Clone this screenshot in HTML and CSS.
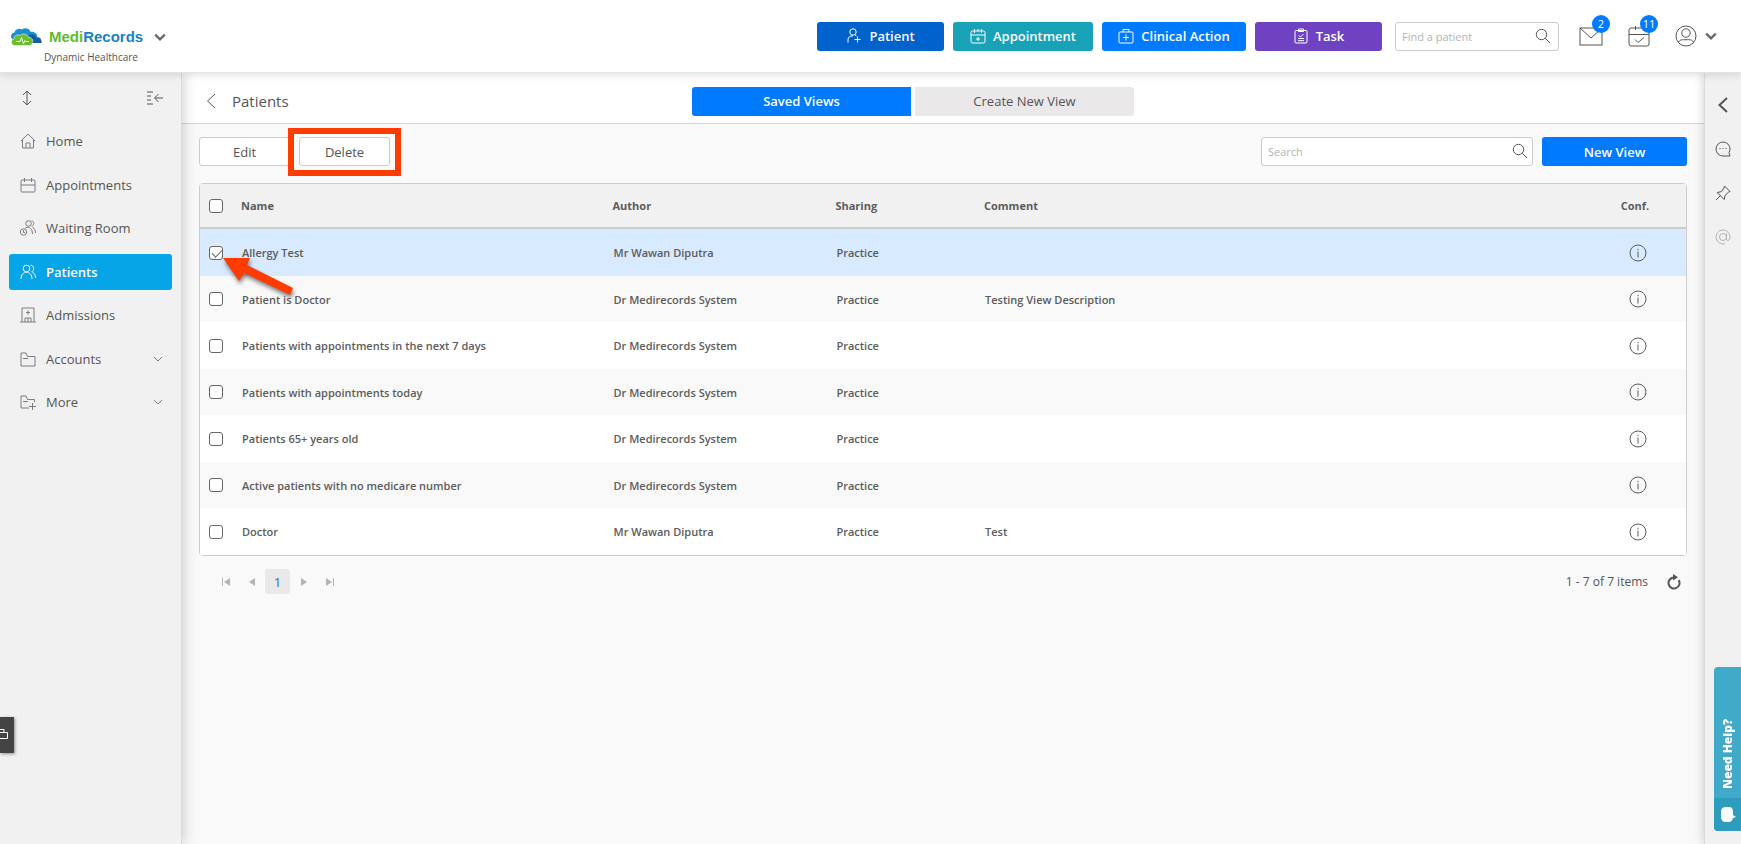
FILE: index.html
```html
<!DOCTYPE html>
<html lang="en">

<head>
    <meta charset="UTF-8">
    <meta name="viewport" content="width=device-width, initial-scale=1.0" />
    <title>Patients - MediRecords</title>
    <link rel="stylesheet" href="styles.css">
</head>

<body>
    <!-- Shared icons -->
    <svg class="sprite" aria-hidden="true">
        <symbol id="i-search" viewBox="0 0 16 16">
            <circle cx="6.5" cy="6.5" r="5.2" />
            <path d="M10.3 10.3L15 15" />
        </symbol>
        <symbol id="i-down" viewBox="0 0 10 10">
            <path d="M1 3l4 4 4-4" />
        </symbol>
        <symbol id="i-back" viewBox="0 0 10 16">
            <path d="M9 1L1.5 8 9 15" />
        </symbol>
        <symbol id="i-info" viewBox="0 0 18 18">
            <circle cx="9" cy="9" r="8" />
            <path d="M9 7.5v6M9 4.8v1.4" />
        </symbol>
    </svg>

    <!-- Top Bar -->
    <header class="topbar">
        <div class="brand">
            <a href="#" class="logo">
                <svg class="cloud" viewBox="0 0 32 18" aria-hidden="true">
                    <path fill="#1b8fd0" d="M4 12C0 11 0 5 4.500 4.500 5 1 10 0 12 1.500 15-1 20 1 20.500 4 25 3 28 7 27 9 31 9 32 12 31 15H10z" />
                    <path fill="#14609f" d="M19 7c3-2 7 0 7.500 3 3-1 5.500 2 5 5H21z" />
                    <path fill="#6abf2b" stroke="#fff" stroke-width=".5" d="M5 17.500C1 17.500 0 12 4 11c0-4 4-5 6-3.500 3-3 8-1 8.500 2 3-.5 5 2 4 4.500 0 2-1 3.500-3 3.500z" />
                    <path fill="none" stroke="#fff" d="M6 13.500h4l1.500-4 2 6 1.500-3 1 1h3" />
                </svg>
                <span class="medi">Medi</span><span class="records">Records</span>
            </a>
            <button class="plain" aria-label="Switch practice"><svg class="icon chevron"><use href="#i-down" /></svg></button>
            <p>Dynamic Healthcare</p>
        </div>

        <div class="actions">
            <button class="btn patient">
                <svg class="icon" viewBox="0 0 14 16"><circle cx="6" cy="4" r="3.200" /><path d="M1 14.500v-2.500q0-4 5-4.200M8 7.200l1.500.8M10.500 8.500v6M7.500 11.500h6" /></svg>
                Patient
            </button>
            <button class="btn appointment">
                <svg class="icon" viewBox="0 0 16 16"><rect x="1" y="3" width="14" height="12" rx="1.500" /><path d="M1 7h14M4.500 1v4M8 1v2M11.500 1v4M8 9v4M6 11h4" /></svg>
                Appointment
            </button>
            <button class="btn clinical">
                <svg class="icon" viewBox="0 0 16 16"><rect x="1" y="4" width="14" height="11" rx="1" /><path d="M5 4V1.500h6V4M8 6.500v6M5 9.500h6" /></svg>
                Clinical Action
            </button>
            <button class="btn task">
                <svg class="icon" viewBox="0 0 14 16"><rect x="1" y="2.500" width="12" height="12.500" rx="1" /><path d="M4.500 1h5v2.500h-5zM4.500 7.500l2 1.500 3-3M4 10.500h6M4 12.700h6" /></svg>
                Task
            </button>
        </div>

        <div class="search find">
            <input type="text" placeholder="Find a patient" aria-label="Find a patient">
            <svg class="icon"><use href="#i-search" /></svg>
        </div>

        <div class="alerts">
            <a href="#" class="alert" aria-label="Messages">
                <svg class="icon" viewBox="0 0 24 22"><rect x="1" y="3" width="22" height="17" /><path d="M1 3l11 10L23 3" /></svg>
                <span class="badge">2</span>
            </a>
            <a href="#" class="alert" aria-label="Tasks due">
                <svg class="icon" viewBox="0 0 24 22"><rect x="2" y="3" width="20" height="18" rx="2" /><path d="M2 9.500h20M8.500 1v4M8 14.500l3 3 6-5" /></svg>
                <span class="badge">11</span>
            </a>
            <button class="plain account" aria-label="Account">
                <svg class="icon" viewBox="0 0 22 22"><circle cx="11" cy="11" r="10" /><circle cx="11" cy="8" r="4.200" /><path d="M3.500 17.500c1-3 3.500-2.800 7.500-2.800s6.500-.2 7.500 2.800" /></svg>
                <svg class="icon chevron"><use href="#i-down" /></svg>
            </button>
        </div>
    </header>

    <div class="layout">
        <!-- Side Menu -->
        <nav class="sidebar">
            <div class="side-tools">
                <button class="plain" aria-label="Resize menu"><svg class="icon" viewBox="0 0 16 16"><path d="M8 2v12M4 5l4-4 4 4M4 11l4 4 4-4" /></svg></button>
                <button class="plain" aria-label="Collapse menu"><svg class="icon" viewBox="0 0 16 16"><path d="M0 2h6M0 6h4M0 10h4M0 14h6M16 8H8M11.500 4L7.500 8l4 4" /></svg></button>
            </div>
            <ul>
                <li><a href="#">
                    <svg class="icon" viewBox="0 0 16 16"><path d="M1 8l7-7 7 7M2.500 7v8h11V7M6 15v-5h4v5" /></svg>
                    Home</a></li>
                <li><a href="#">
                    <svg class="icon" viewBox="0 0 16 16"><rect x="1" y="3" width="14" height="12" rx="1" /><path d="M1 8h14M4.500 1v4M11.500 1v4" /></svg>
                    Appointments</a></li>
                <li><a href="#">
                    <svg class="icon" viewBox="0 0 16 16"><circle cx="8.500" cy="3.500" r="2.800" /><path d="M11.500 1c3 0 3 4.500 0 5M5 8.500c2-2.500 7.500-1.500 7.500 5.500M12.500 7.500c2 .5 3 3 3 5.500" /><circle cx="3.500" cy="12" r="3.200" /><path d="M3.500 10v2.500h1.500" /></svg>
                    Waiting Room</a></li>
                <li><a href="#" class="active">
                    <svg class="icon" viewBox="0 0 16 16"><circle cx="6.500" cy="4.500" r="3.300" /><path d="M1 15c0-9 11-9 11 0M10.500 1.300c4 0 4 6 1 6.500M12.500 8.500c2.500 1 3 3 3 5.500" /></svg>
                    Patients</a></li>
                <li><a href="#">
                    <svg class="icon" viewBox="0 0 16 16"><path d="M0 15h16M2 15V1h12v14M8 3.500v4M6 5.500h4M5 15v-4h6v4M8 11v4" /></svg>
                    Admissions</a></li>
                <li><a href="#">
                    <svg class="icon" viewBox="0 0 16 16"><path d="M1 15V2h5l1.500 3.500H15V15zM3 7.500h5" /></svg>
                    Accounts<svg class="icon caret"><use href="#i-down" /></svg></a></li>
                <li><a href="#">
                    <svg class="icon" viewBox="0 0 16 16"><path d="M9 14H1V2h5l1.500 3.500h7V8M3 7.500h5M12.500 9v7M9 12.500h7" /></svg>
                    More<svg class="icon caret"><use href="#i-down" /></svg></a></li>
            </ul>
        </nav>

        <main>
            <!-- Page Heading -->
            <div class="page-head">
                <div class="title">
                    <a href="#" aria-label="Back"><svg class="icon"><use href="#i-back" /></svg></a>
                    <h1>Patients</h1>
                </div>
                <div class="tabs">
                    <button class="active">Saved Views</button>
                    <button>Create New View</button>
                </div>
            </div>

            <div class="content">
                <div class="toolbar">
                    <button class="btn outline">Edit</button>
                    <div class="marked"><button class="btn outline">Delete</button></div>
                    <div class="search views">
                        <input type="text" placeholder="Search" aria-label="Search views">
                        <svg class="icon"><use href="#i-search" /></svg>
                    </div>
                    <button class="btn new-view">New View</button>
                </div>

                <!-- Saved Views -->
                <div class="grid">
                    <table>
                        <colgroup>
                            <col class="c-check">
                            <col class="c-name">
                            <col class="c-author">
                            <col class="c-sharing">
                            <col>
                            <col class="c-conf">
                        </colgroup>
                        <thead>
                            <tr>
                                <th><input type="checkbox" aria-label="Select all"></th>
                                <th>Name</th>
                                <th>Author</th>
                                <th>Sharing</th>
                                <th>Comment</th>
                                <th>Conf.</th>
                            </tr>
                        </thead>
                        <tbody>
                            <tr class="selected">
                                <td>
                                    <input type="checkbox" aria-label="Allergy Test" checked>
                                    <svg class="pointer" viewBox="0 0 72 40" aria-hidden="true"><path d="M0 0h27l-3 7 46 23-3 7-46-22-5 8z" /></svg>
                                </td>
                                <td>Allergy Test</td>
                                <td>Mr Wawan Diputra</td>
                                <td>Practice</td>
                                <td></td>
                                <td><svg class="icon info"><use href="#i-info" /></svg></td>
                            </tr>
                            <tr>
                                <td><input type="checkbox" aria-label="Patient is Doctor"></td>
                                <td>Patient is Doctor</td>
                                <td>Dr Medirecords System</td>
                                <td>Practice</td>
                                <td>Testing View Description</td>
                                <td><svg class="icon info"><use href="#i-info" /></svg></td>
                            </tr>
                            <tr>
                                <td><input type="checkbox" aria-label="Patients with appointments in the next 7 days"></td>
                                <td>Patients with appointments in the next 7 days</td>
                                <td>Dr Medirecords System</td>
                                <td>Practice</td>
                                <td></td>
                                <td><svg class="icon info"><use href="#i-info" /></svg></td>
                            </tr>
                            <tr>
                                <td><input type="checkbox" aria-label="Patients with appointments today"></td>
                                <td>Patients with appointments today</td>
                                <td>Dr Medirecords System</td>
                                <td>Practice</td>
                                <td></td>
                                <td><svg class="icon info"><use href="#i-info" /></svg></td>
                            </tr>
                            <tr>
                                <td><input type="checkbox" aria-label="Patients 65+ years old"></td>
                                <td>Patients 65+ years old</td>
                                <td>Dr Medirecords System</td>
                                <td>Practice</td>
                                <td></td>
                                <td><svg class="icon info"><use href="#i-info" /></svg></td>
                            </tr>
                            <tr>
                                <td><input type="checkbox" aria-label="Active patients with no medicare number"></td>
                                <td>Active patients with no medicare number</td>
                                <td>Dr Medirecords System</td>
                                <td>Practice</td>
                                <td></td>
                                <td><svg class="icon info"><use href="#i-info" /></svg></td>
                            </tr>
                            <tr>
                                <td><input type="checkbox" aria-label="Doctor"></td>
                                <td>Doctor</td>
                                <td>Mr Wawan Diputra</td>
                                <td>Practice</td>
                                <td>Test</td>
                                <td><svg class="icon info"><use href="#i-info" /></svg></td>
                            </tr>
                        </tbody>
                    </table>
                </div>

                <!-- Pager -->
                <div class="pager">
                    <button aria-label="First page"><svg viewBox="0 0 8 8"><path d="M0 0h1v8H0zM8 0v8L2 4z" /></svg></button>
                    <button aria-label="Previous page"><svg viewBox="0 0 8 8"><path d="M7 0v8L1 4z" /></svg></button>
                    <button class="current">1</button>
                    <button aria-label="Next page"><svg viewBox="0 0 8 8"><path d="M1 0v8l6-4z" /></svg></button>
                    <button aria-label="Last page"><svg viewBox="0 0 8 8"><path d="M7 0h1v8H7zM0 0v8l6-4z" /></svg></button>
                    <span class="count">1 - 7 of 7 items</span>
                    <button class="refresh" aria-label="Refresh"><svg class="icon" viewBox="0 0 14 16"><path d="M7 3.500a5.500 5.500 0 1 0 4.700 2.600" /><path class="head" d="M6 0l5 3.200L6 6.500z" /></svg></button>
                </div>
            </div>
        </main>

        <!-- Right Rail -->
        <aside class="rail">
            <button class="plain" aria-label="Expand panel"><svg class="icon open"><use href="#i-back" /></svg></button>
            <button class="plain" aria-label="Chat"><svg class="icon" viewBox="0 0 16 16"><path d="M14 11.500l1 3.500H8a7 7 0 1 1 7-7q0 2-1 3.500M4.500 7.500h1M7.500 7.500h1M10.500 7.500h1" /></svg></button>
            <button class="plain" aria-label="Pinned"><svg class="icon" viewBox="0 0 16 16"><path d="M9.500 1L15 6.500l-1.500.7-3.500 3.300-.8 4-7-7 4-.8L9 3zM5.500 10.500L1 15" /></svg></button>
            <button class="plain" aria-label="Mentions" disabled><svg class="icon" viewBox="0 0 16 16"><circle cx="8" cy="8" r="3.500" /><path d="M11.500 4.500V10c0 2.500 3.500 2 3.500-2a7 7 0 1 0-5 6.700" /></svg></button>
        </aside>
    </div>

    <button class="side-tab" aria-label="Open toolbox">
        <svg viewBox="0 0 14 14"><path d="M-4 4.500H7.500v6H-4M-1 1.500h5v3" /></svg>
    </button>

    <button class="help">
        <span class="help-text">Need Help?</span>
        <span class="help-icon"><svg viewBox="0 0 16 16"><path d="M5 0h3q4 0 4 5v3l3 2-3 1q-1 4-4 4H5q-5 0-5-5V5q0-5 5-5z" /></svg></span>
    </button>
</body>

</html>
```

FILE: styles.css
```css
* {
    margin: 0;
    padding: 0;
    box-sizing: border-box;
}

body {
    display: flex;
    flex-direction: column;
    min-height: 100vh;
    font-family: 'Open Sans', 'Noto Sans', sans-serif;
    font-size: 12px;
    font-weight: 500;
    color: #555;
    background-color: #f9f9f9;
}

button,
input {
    font: inherit;
    color: inherit;
}

button {
    cursor: pointer;
    border: none;
}

a {
    color: inherit;
    text-decoration: none;
}

ul {
    list-style: none;
}

/* Icons */
.sprite {
    position: absolute;
    width: 0;
    height: 0;
}

.icon {
    width: 16px;
    height: 16px;
    flex: none;
    fill: none;
    stroke: currentColor;
    stroke-width: 1;
}

.icon.chevron {
    width: 12px;
    height: 12px;
    stroke: #6b6b6b;
    stroke-width: 2;
}

.plain {
    display: flex;
    align-items: center;
    background: none;
}

/* Top Bar */
.topbar {
    position: relative;
    z-index: 3;
    display: flex;
    align-items: center;
    height: 73px;
    padding: 0 24px 0 10px;
    background-color: white;
    border-bottom: 1px solid #e4e4e4;
    box-shadow: 0 2px 8px rgba(0, 0, 0, 0.12);
}

.brand {
    display: grid;
    grid-template-columns: auto auto;
    align-items: center;
    column-gap: 11px;
    row-gap: 2px;
    margin-top: 20px;
    margin-right: auto;
}

.brand p {
    grid-column: 1 / 3;
    padding-left: 34px;
    font-size: 10px;
    line-height: 16px;
}

.logo {
    display: flex;
    align-items: center;
    font-family: 'Liberation Sans', Arial, sans-serif;
    font-size: 15px;
    font-weight: bold;
    line-height: 20px;
}

.cloud {
    width: 32px;
    height: 18px;
    margin-right: 7px;
}

.medi {
    color: #62bb2f;
}

.records {
    color: #1a82bf;
}

.actions {
    display: flex;
    gap: 9px;
}

.btn {
    display: flex;
    align-items: center;
    justify-content: center;
    gap: 7px;
    height: 29px;
    border-radius: 3px;
    font-size: 13px;
    color: white;
}

.actions .btn {
    width: 127px;
    font-weight: 600;
}

.actions .patient {
    background-color: #0062cc;
}

.actions .appointment {
    width: 140px;
    background-color: #17a2b8;
}

.actions .clinical {
    width: 144px;
    background-color: #007bff;
}

.actions .task {
    background-color: #6f42c1;
}

.search {
    position: relative;
}

.search input {
    width: 100%;
    height: 29px;
    padding: 0 32px 0 6px;
    background-color: white;
    border: 1px solid #ccc;
    border-radius: 3px;
    outline: none;
}

.search input::placeholder {
    color: #b4b4b4;
}

.search .icon {
    position: absolute;
    top: 6px;
    right: 5px;
}

.find {
    width: 164px;
    margin-left: 13px;
    font-size: 11px;
}

.find .icon {
    right: 8px;
}

.alerts {
    display: flex;
    align-items: center;
    margin-left: 20px;
}

.alert {
    position: relative;
    width: 24px;
    height: 22px;
    margin-right: 24px;
}

.alert .icon {
    width: 24px;
    height: 22px;
}

.badge {
    position: absolute;
    top: -10px;
    right: -7px;
    width: 18px;
    height: 18px;
    border-radius: 50%;
    background-color: #007bff;
    color: white;
    font-size: 11px;
    line-height: 18px;
    text-align: center;
}

.account {
    gap: 8px;
}

.account .icon:first-child {
    width: 22px;
    height: 22px;
}

/* Page frame */
.layout {
    flex: 1;
    display: flex;
}

main {
    flex: 1;
    min-width: 0;
}

/* Side Menu */
.sidebar {
    position: relative;
    z-index: 2;
    width: 182px;
    padding: 16px 9px 0;
    background-color: #f1f1f1;
    border-right: 1px solid #dcdcdc;
    box-shadow: 2px 0 12px rgba(0, 0, 0, 0.18);
}

.side-tools {
    display: flex;
    justify-content: space-between;
    padding: 1px 9px 0 10px;
    margin-bottom: 17px;
}

.sidebar ul {
    display: flex;
    flex-direction: column;
    justify-content: space-between;
    min-height: 297px;
}

.sidebar a {
    display: flex;
    align-items: center;
    gap: 10px;
    height: 36px;
    padding: 0 9px 0 11px;
    border-radius: 3px;
    font-size: 13px;
}

.sidebar a.active {
    background-color: #05a5e8;
    color: white;
    font-weight: 600;
}

.sidebar a:not(.active) .icon {
    stroke: #7d7d7d;
}

.sidebar .caret {
    width: 10px;
    height: 10px;
    margin-left: auto;
}

/* Page Heading */
.page-head {
    display: grid;
    grid-template-columns: 1fr auto 1fr;
    align-items: center;
    height: 51px;
    padding: 6px 84px 0 24px;
    background-color: white;
    border-bottom: 1px solid #d4d4d4;
}

.title {
    display: flex;
    align-items: center;
    gap: 16px;
}

.title .icon {
    display: block;
    width: 10px;
    height: 16px;
}

h1 {
    font-size: 15px;
    font-weight: 500;
    line-height: 20px;
}

.tabs {
    display: flex;
    gap: 4px;
}

.tabs button {
    width: 219px;
    height: 29px;
    border-radius: 0 3px 3px 0;
    background-color: #eae8e8;
    font-size: 13px;
}

.tabs .active {
    border-radius: 3px 0 0 3px;
    background-color: #007bff;
    color: white;
    font-weight: 600;
}

/* Content */
.content {
    padding: 13px 17px;
}

.toolbar {
    display: flex;
    gap: 9px;
    margin-bottom: 17px;
}

.btn.outline {
    width: 91px;
    background-color: white;
    border: 1px solid #ccc;
    color: #555;
}

/* Red frame round the Delete button */
.marked {
    position: relative;
}

.marked::after {
    content: "";
    position: absolute;
    inset: -9px -11px -10px;
    border: 6px solid #ff3c00;
    pointer-events: none;
}

.views {
    width: 272px;
    margin-left: auto;
    font-size: 11px;
}

.new-view {
    width: 145px;
    background-color: #007bff;
    font-weight: 600;
}

/* Saved Views */
.grid {
    border: 1px solid #ccc;
    border-radius: 4px;
}

table {
    width: 100%;
    table-layout: fixed;
    border-collapse: separate;
    border-spacing: 0;
}

.c-check {
    width: 32px;
}

.c-name {
    width: 25%;
}

.c-author {
    width: 15%;
}

.c-sharing {
    width: 10%;
}

.c-conf {
    width: 5%;
}

th,
td {
    height: 46px;
    padding: 0 9px 0 10px;
    text-align: left;
    font-size: 11px;
    font-weight: 600;
    color: #5c5c5c;
}

th {
    height: 45px;
    padding-left: 9px;
    background-color: #f1f1f1;
    border-bottom: 2px solid #ccc;
    font-weight: 700;
}

td {
    background-color: #f9f9f9;
}

tbody tr:nth-child(odd) td {
    height: 47px;
    background-color: white;
}

tbody tr.selected td {
    background-color: #d8eaff;
}

th:first-child,
td:first-child {
    position: relative;
    padding: 0 0 0 9px;
}

td:last-child {
    padding-left: 17px;
}

.info {
    display: block;
    width: 18px;
    height: 18px;
}

input[type="checkbox"] {
    appearance: none;
    display: block;
    width: 14px;
    height: 14px;
    border: 1px solid #666;
    border-radius: 3px;
    background-color: white;
}

input[type="checkbox"]:checked::before {
    content: "";
    display: block;
    width: 9px;
    height: 5px;
    margin: 2px 0 0 2px;
    border-left: 1px solid #666;
    border-bottom: 1px solid #666;
    transform: rotate(-45deg);
}

/* Arrow that points at the ticked row */
.pointer {
    position: absolute;
    z-index: 1;
    top: 29px;
    left: 23px;
    width: 72px;
    height: 40px;
    overflow: visible;
    fill: #ff3c00;
    filter: drop-shadow(1px 3px 2px rgba(0, 0, 0, 0.5));
    pointer-events: none;
}

/* Pager */
.pager {
    display: flex;
    align-items: center;
    gap: 1px;
    padding: 13px 5px 0 14px;
}

.pager button {
    display: flex;
    align-items: center;
    justify-content: center;
    width: 25px;
    height: 25px;
    border-radius: 3px;
    background: none;
}

.pager button > svg {
    width: 8px;
    height: 8px;
    fill: #b4b4b4;
}

.pager .current {
    background-color: #eae8e8;
    color: #007bff;
    font-size: 13px;
}

.count {
    margin-left: auto;
}

.pager .refresh {
    width: 16px;
    margin-left: 17px;
}

.pager .refresh .icon {
    width: 14px;
    height: 16px;
    fill: none;
    stroke-width: 2;
}

.pager .refresh .head {
    fill: currentColor;
    stroke: none;
}

/* Right Rail */
.rail {
    position: relative;
    z-index: 2;
    display: flex;
    flex-direction: column;
    align-items: center;
    gap: 28px;
    width: 37px;
    padding-top: 24px;
    background-color: #f1f1f1;
    border-left: 1px solid #dcdcdc;
    box-shadow: -2px 0 8px rgba(0, 0, 0, 0.14);
}

.rail .open {
    width: 10px;
    stroke-width: 2;
}

.rail button:disabled {
    color: #b4b4b4;
}

/* Tabs fixed to the window edges */
.side-tab {
    position: fixed;
    z-index: 4;
    left: 0;
    bottom: 91px;
    width: 14px;
    height: 36px;
    background-color: #444;
    box-shadow: 1px 1px 3px rgba(0, 0, 0, 0.4);
}

.side-tab svg {
    display: block;
    width: 14px;
    height: 14px;
    fill: none;
    stroke: white;
}

.help {
    position: fixed;
    z-index: 4;
    right: 0;
    bottom: 13px;
    display: flex;
    flex-direction: column;
    width: 27px;
    height: 164px;
    border-radius: 4px 0 0 4px;
    background-color: #41aac9;
    color: white;
    font-size: 12px;
    font-weight: 800;
    overflow: hidden;
}

.help-text {
    flex: 1;
    width: 27px;
    padding-top: 9px;
    line-height: 27px;
    text-align: left;
    writing-mode: vertical-rl;
    transform: rotate(180deg);
}

.help-icon {
    width: 27px;
    height: 33px;
    padding: 9px 0 0 7px;
    background-color: #2e9dbd;
}

.help-icon svg {
    display: block;
    width: 16px;
    height: 16px;
    fill: white;
}
```
